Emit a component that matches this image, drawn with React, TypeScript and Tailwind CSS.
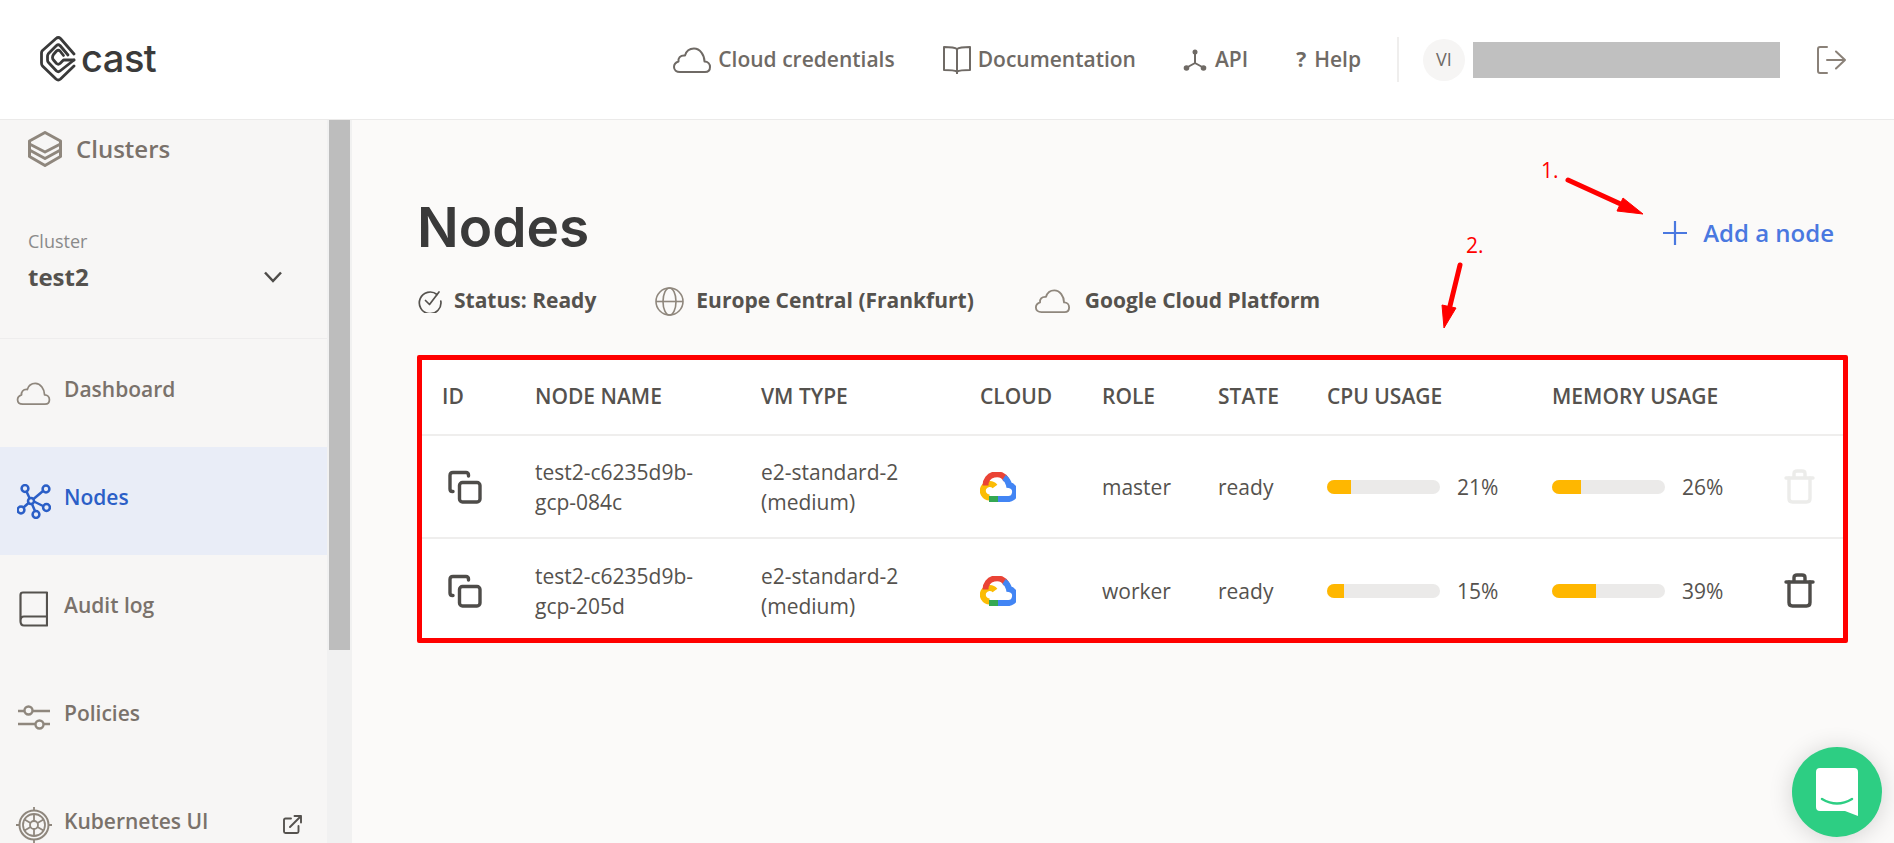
import React from "react";

const CloudIcon = ({ className }: { className?: string }) => (
  <svg viewBox="0 0 38 26" fill="none" stroke="currentColor" strokeWidth="2" strokeLinejoin="round" className={className}>
    <path d="M7 25 H32 C35 25 37 23 37 20 C37 17 35 14.500 31.500 14.500 C31.500 8 27 1.500 21 1.500 C16 1.500 13 5 12 8.500 C7 8 5 11.500 5.500 14.500 C2.500 15.500 1 17.500 1 20 C1 23 3.500 25 7 25 Z" />
  </svg>
);

const BookOpen = () => (
  <svg viewBox="0 0 28 30" fill="none" stroke="#6f6a65" strokeWidth="2" strokeLinejoin="round" className="w-[28px] h-[30px]">
    <path d="M14 4 C12 2.500 9 2 1 2 V25 C9 25 12 25.500 14 26.500 C16 25.500 19 25 27 25 V2 C19 2 16 2.500 14 4 Z" />
    <path d="M14 4 V29" />
  </svg>
);

const ApiIcon = () => (
  <svg viewBox="0 0 24 24" fill="#6f6a65" stroke="#6f6a65" strokeWidth="2" className="w-[24px] h-[24px]">
    <path d="M12 5 V15 L3 20 M12 15 L21 20" fill="none" />
    <circle cx="12" cy="4" r="2.500" stroke="none" />
    <circle cx="3.500" cy="20" r="2.800" stroke="none" />
    <circle cx="20.500" cy="20" r="2.800" stroke="none" />
  </svg>
);

const LogoutIcon = () => (
  <svg viewBox="0 0 29 28" fill="none" stroke="#8a8178" strokeWidth="2" strokeLinecap="round" strokeLinejoin="round" className="w-[29px] h-[28px]">
    <path d="M10 1 H3 Q1 1 1 3 V25 Q1 27 3 27 H10" />
    <path d="M10 14 H28 M19 5.500 L28 14 L19 22.500" />
  </svg>
);

// outer rounded diamond, open on the right, with the "c" inside
const CastLogo = () => (
  <svg viewBox="0 0 36 46" fill="none" stroke="#3a3a3a" strokeWidth="2.800" strokeLinejoin="round" strokeLinecap="round" className="w-[36px] h-[46px]">
    <path d="M34 18 L20.500 2.500 Q18.300 0.500 16 2.500 L2.500 14.500 Q1.500 15.500 1.500 17 V27 Q1.500 29 2.500 30 L16 43 Q18.300 45 20.500 43 L34 30" />
    <path d="M28 19 L20 9.500 Q18.300 8 16.500 9.500 L8.500 17.500 Q7.500 19 7.500 20 V24 Q7.500 25.500 8.500 26.500 L16.500 35 Q18.300 36.500 20 35 L34 24" />
    <path d="M23.500 19.500 L20 15 Q18.300 13.500 16.500 15 L13.500 18.500 Q12.500 20 12.500 21.500 Q12.500 23 13.500 24 L16.500 27.500 Q18.300 29 20 27.500 L23.500 24 H34" />
  </svg>
);

const LayersIcon = () => (
  <svg viewBox="0 0 34 36" fill="none" stroke="#8f877d" strokeWidth="3" strokeLinejoin="round" className="w-[34px] h-[36px]">
    <path d="M17 1.500 L32.500 10 V13 L17 21 L1.500 13 V10 Z" />
    <path d="M1.500 13 V19 L17 27.500 L32.500 19 V13" />
    <path d="M1.500 19 V25.500 L17 34.500 L32.500 25.500 V19" />
  </svg>
);

const NodesIcon = () => (
  <svg viewBox="0 0 34 35" fill="none" stroke="#2b5fc7" strokeWidth="2.500" className="w-[34px] h-[35px]">
    <circle cx="8" cy="4.500" r="3.400" />
    <circle cx="29" cy="5" r="3.400" />
    <circle cx="4" cy="26" r="3.400" />
    <circle cx="29.500" cy="23.500" r="3.400" />
    <circle cx="19" cy="30.500" r="3.400" />
    <circle cx="14" cy="17" r="3" />
    <path d="M9.500 7.500 L12.500 14 M26 7 L16.500 15 M6.500 23.500 L11.500 19 M17 17.500 L26 22 M15 20 L18 27" />
  </svg>
);

const BookIcon = () => (
  <svg viewBox="0 0 29 36" fill="none" stroke="#55524e" strokeWidth="2.200" strokeLinejoin="round" className="w-[29px] h-[36px]">
    <path d="M1.500 30 V4 Q1.500 1.500 4 1.500 H28 V34.500 H5 Q1.500 34.500 1.500 30 Q1.500 25.500 5 25.500 H28" />
  </svg>
);

const SlidersIcon = () => (
  <svg viewBox="0 0 34 25" fill="none" stroke="#8f877d" strokeWidth="2.400" className="w-[34px] h-[25px]">
    <path d="M1 6 H7.500 M16 6 H33 M1 19 H18.500 M27 19 H33" />
    <circle cx="11.500" cy="5.500" r="4" />
    <circle cx="22.500" cy="19.500" r="4" />
  </svg>
);

const HelmIcon = () => (
  <svg viewBox="0 0 36 36" fill="none" stroke="#8f877d" strokeWidth="1.800" className="w-[36px] h-[36px]">
    <circle cx="18" cy="18" r="14.500" strokeWidth="2" />
    <circle cx="18" cy="18" r="11" />
    <circle cx="18" cy="18" r="4" />
    <path d="M18 14 V7 M18 22 V29 M14.500 16 L8.500 12.500 M21.500 20 L27.500 23.500 M21.500 16 L27.500 12.500 M14.500 20 L8.500 23.500 M18 3.500 V0 M18 32.500 V36 M3.500 18 H0 M32.500 18 H36" />
  </svg>
);

const ExternalIcon = () => (
  <svg viewBox="0 0 19 19" fill="none" stroke="#55524e" strokeWidth="1.900" strokeLinecap="round" strokeLinejoin="round" className="w-[19px] h-[19px]">
    <path d="M8 3.500 H2.500 Q1 3.500 1 5 V16.500 Q1 18 2.500 18 H14 Q15.500 18 15.500 16.500 V11" />
    <path d="M7 12 L18 1 M11.500 1 H18 V7.500" />
  </svg>
);

const CheckIcon = () => (
  <svg viewBox="0 0 24 24" fill="none" stroke="#55524e" strokeWidth="1.700" strokeLinecap="round" strokeLinejoin="round" className="w-[24px] h-[24px]">
    <path d="M19 5.500 A10.800 10.800 0 1 0 22.800 12" />
    <path d="M7.500 11.500 L11.500 15.500 L21 3" />
  </svg>
);

const GlobeIcon = () => (
  <svg viewBox="0 0 29 29" fill="none" stroke="#8f877d" strokeWidth="1.600" className="w-[29px] h-[29px]">
    <circle cx="14.500" cy="14.500" r="13.500" />
    <ellipse cx="14.500" cy="14.500" rx="6.500" ry="13.500" />
    <path d="M1 14.500 H28" />
  </svg>
);

const CopyIcon = () => (
  <svg viewBox="0 0 34 34" fill="none" stroke="#4e4c49" strokeWidth="3.400" strokeLinecap="round" strokeLinejoin="round" className="w-[34px] h-[34px] ml-[6px]">
    <path d="M20.500 6 V5 Q20.500 2.500 18 2.500 H5 Q2 2.500 2 5.500 V19 Q2 21.500 4.500 21.500 H5" />
    <rect x="11.500" y="12.500" width="20.500" height="19.500" rx="3" />
  </svg>
);

const TrashIcon = ({ color }: { color: string }) => (
  <svg viewBox="0 0 31 35" fill="none" stroke={color} strokeWidth="3.400" strokeLinecap="round" strokeLinejoin="round" className="w-[31px] h-[35px]">
    <path d="M2 9 H29" />
    <path d="M10 8 V4.500 Q10 2 13 2 H18 Q21 2 21 4.500 V8" />
    <path d="M5 9 V29.500 Q5 33 8.500 33 H22.500 Q26 33 26 29.500 V9" />
  </svg>
);

const GoogleCloud = () => (
  <svg viewBox="0 0 36 30" fill="none" strokeWidth="6" className="w-[36px] h-[30px]">
    <path d="M9.500 25.500 A6.800 6.800 0 1 1 15 14.500" stroke="#fbbc05" />
    <path d="M5.500 13.500 A11.200 11.200 0 0 1 26.500 8" stroke="#ea4335" />
    <path d="M24 5.500 A11 11 0 0 1 29 13 A6.500 6.500 0 0 1 27 27 H18" stroke="#4285f4" />
    <path d="M9 27 H18" stroke="#34a853" />
  </svg>
);

const Bar = ({ value }: { value: number }) => (
  <div className="flex items-center">
    <div className="w-[113px] h-[14px] rounded-[7px] bg-[#ebeae9] overflow-hidden">
      <div className="h-full bg-[#ffb700]" style={{ width: `${value}%` }} />
    </div>
    <span className="ml-[17px]">{value}%</span>
  </div>
);

const gridCols = "grid grid-cols-[93px_226px_219px_122px_116px_109px_225px_232px_1fr] items-center pl-[20px]";

const nodes = [
  { id: "084c", role: "master", cpu: 21, mem: 26, trash: "#ececea" },
  { id: "205d", role: "worker", cpu: 15, mem: 39, trash: "#4e4c49" },
];

const sideItems = [
  { label: "Dashboard", icon: <CloudIcon className="w-[35px] h-[23px] text-[#8f877d]" /> },
  { label: "Nodes", icon: <NodesIcon />, active: true },
  { label: "Audit log", icon: <BookIcon /> },
  { label: "Policies", icon: <SlidersIcon /> },
  { label: "Kubernetes UI", icon: <HelmIcon />, external: true },
];

export default function App() {
  return (
    <div className="relative h-[843px] overflow-hidden flex flex-col bg-[#fbfaf9] font-['Open_Sans',sans-serif] text-[21px] text-[#4e4c49]">
      {/* Top bar */}
      <header className="h-[120px] shrink-0 bg-white border-b border-[#ebeae9] flex items-center pl-[40px] pr-[48px]">
        <div className="flex items-center gap-[5px] -mt-[1px]">
          <CastLogo />
          <span className="font-['Inter',sans-serif] text-[38px] leading-[46px] font-medium text-[#3a3a3a] tracking-[-0.5px] -mt-[3px]">cast</span>
        </div>
        <nav className="ml-auto flex items-center font-semibold text-[#6f6a65]">
          <a className="flex items-center gap-[7px]">
            <CloudIcon className="w-[38px] h-[26px] text-[#6f6a65]" />
            Cloud credentials
          </a>
          <a className="flex items-center gap-[7px] ml-[48px]">
            <BookOpen />
            Documentation
          </a>
          <a className="flex items-center gap-[8px] ml-[47px]">
            <ApiIcon />
            API
          </a>
          <a className="flex items-center gap-[8px] ml-[48px]">
            <span className="font-bold">?</span>
            Help
          </a>
        </nav>
        <div className="w-[2px] h-[45px] bg-[#efeeed] ml-[36px]" />
        <div className="w-[42px] h-[42px] rounded-full bg-[#f6f5f4] ml-[24px] flex items-center justify-center text-[18px] text-[#6f6a65]">VI</div>
        <div className="w-[307px] h-[36px] bg-[#c0c0c0] ml-[8px]" />
        <div className="ml-[37px]">
          <LogoutIcon />
        </div>
      </header>

      <div className="flex flex-1 min-h-0">
        {/* Sidebar */}
        <aside className="w-[352px] shrink-0 flex overflow-hidden bg-[#f1f1f1]">
          <div className="w-[327px] shrink-0 bg-[#f7f6f5] text-[#7a726b]">
            <div className="h-[58px] flex items-center pl-[28px] gap-[14px]">
              <LayersIcon />
              <span className="text-[24px] font-semibold leading-none">Clusters</span>
            </div>
            <div className="h-[161px] border-b border-[#eeeded] pl-[28px] pr-[45px] pt-[50px]">
              <div className="text-[18px] leading-[26px] text-[#8a8a8a]">Cluster</div>
              <div className="flex items-center justify-between mt-[8px]">
                <span className="text-[24px] leading-[30px] font-bold text-[#55524e]">test2</span>
                <svg viewBox="0 0 18 12" fill="none" stroke="#4e4c49" strokeWidth="2.500" className="w-[18px] h-[12px]">
                  <path d="M1 1.500 L9 10 L17 1.500" />
                </svg>
              </div>
            </div>
            {sideItems.map((item) => (
              <div
                key={item.label}
                className={`h-[108px] flex items-center text-[21px] font-semibold ${item.active ? "bg-[#e9edf7] text-[#2b5fc7]" : ""}`}
              >
                <div className="w-[64px] flex justify-center pl-[3px]">{item.icon}</div>
                <span className="pb-[6px]">{item.label}</span>
                {item.external && (
                  <div className="ml-auto mr-[25px] pb-[2px]">
                    <ExternalIcon />
                  </div>
                )}
              </div>
            ))}
          </div>
          <div className="w-[25px] shrink-0 pl-[2px] pr-[2px]">
            <div className="h-[530px] bg-[#bdbdbd]" />
          </div>
        </aside>

        {/* Main */}
        <main className="flex-1 min-w-0 pl-[65px] pr-[46px]">
          <div className="flex items-start justify-between pt-[80px]">
            <h1 className="font-['Inter',sans-serif] text-[55px] leading-[54px] font-semibold text-[#3a3a3a]">Nodes</h1>
            <button className="flex items-center gap-[16px] mt-[18px] mr-[14px] text-[24px] leading-[30px] font-semibold text-[#4a78e0]">
              <svg viewBox="0 0 24 24" fill="none" stroke="#4a78e0" strokeWidth="2.200" className="w-[24px] h-[24px]">
                <path d="M12 0 V24 M0 12 H24" />
              </svg>
              Add a node
            </button>
          </div>

          <div className="flex items-center mt-[32px] pl-[1px] h-[30px] font-bold text-[#55524e]">
            <CheckIcon />
            <span className="ml-[12px]">Status: Ready</span>
            <div className="ml-[59px]">
              <GlobeIcon />
            </div>
            <span className="ml-[12px]">Europe Central (Frankfurt)</span>
            <CloudIcon className="ml-[59px] w-[39px] h-[24px] text-[#8f877d]" />
            <span className="ml-[13px]">Google Cloud Platform</span>
          </div>

          {/* Nodes table */}
          <div className="mt-[39px] h-[288px] border-[5px] border-[#ff0000] rounded-[2px] bg-white overflow-hidden">
            <div className={`${gridCols} h-[76px] border-b-2 border-[#efeeed] font-semibold text-[#55524e]`}>
              <span>ID</span>
              <span>NODE NAME</span>
              <span>VM TYPE</span>
              <span>CLOUD</span>
              <span>ROLE</span>
              <span>STATE</span>
              <span>CPU USAGE</span>
              <span>MEMORY USAGE</span>
            </div>
            {nodes.map((node, i) => (
              <div
                key={node.id}
                className={`${gridCols} h-[103px] leading-[30px] font-normal text-[#55524e] ${i === 0 ? "border-b-2 border-[#efeeed]" : ""}`}
              >
                <CopyIcon />
                <span>
                  test2-c6235d9b-
                  <br />
                  gcp-{node.id}
                </span>
                <span>
                  e2-standard-2
                  <br />
                  (medium)
                </span>
                <GoogleCloud />
                <span>{node.role}</span>
                <span>ready</span>
                <Bar value={node.cpu} />
                <Bar value={node.mem} />
                <TrashIcon color={node.trash} />
              </div>
            ))}
          </div>
        </main>
      </div>

      {/* Red annotations drawn on top of the page */}
      <span className="absolute left-[1541px] top-[156px] text-[21px] leading-[28px] text-[#ff0000]">1.</span>
      <span className="absolute left-[1466px] top-[231px] text-[21px] leading-[28px] text-[#ff0000]">2.</span>
      <svg className="absolute left-0 top-0 w-[1894px] h-[843px] pointer-events-none" viewBox="0 0 1894 843" fill="none">
        <path d="M1568 180 L1625 206" stroke="#ff0000" strokeWidth="5" strokeLinecap="round" />
        <path d="M1643 214 L1617 211 L1623 198 Z" fill="#ff0000" stroke="#ff0000" strokeWidth="1" />
        <path d="M1460 265 L1449 310" stroke="#ff0000" strokeWidth="5" strokeLinecap="round" />
        <path d="M1444 328 L1442 305 L1456 308 Z" fill="#ff0000" stroke="#ff0000" strokeWidth="1" />
      </svg>

      {/* Chat launcher */}
      <div className="absolute left-[1792px] top-[747px] w-[90px] h-[90px] rounded-full bg-[#2dce83] shadow-[0_2px_24px_rgba(0,0,0,0.16)] flex items-center justify-center">
        <svg viewBox="0 0 42 48" className="w-[42px] h-[48px]">
          <path d="M4 0 H38 Q42 0 42 4 V48 L29 43 H4 Q0 43 0 39 V4 Q0 0 4 0 Z" fill="#ffffff" />
          <path d="M6 31 Q21 40 36 31" fill="none" stroke="#2dce83" strokeWidth="2.500" strokeLinecap="round" />
        </svg>
      </div>
    </div>
  );
}
